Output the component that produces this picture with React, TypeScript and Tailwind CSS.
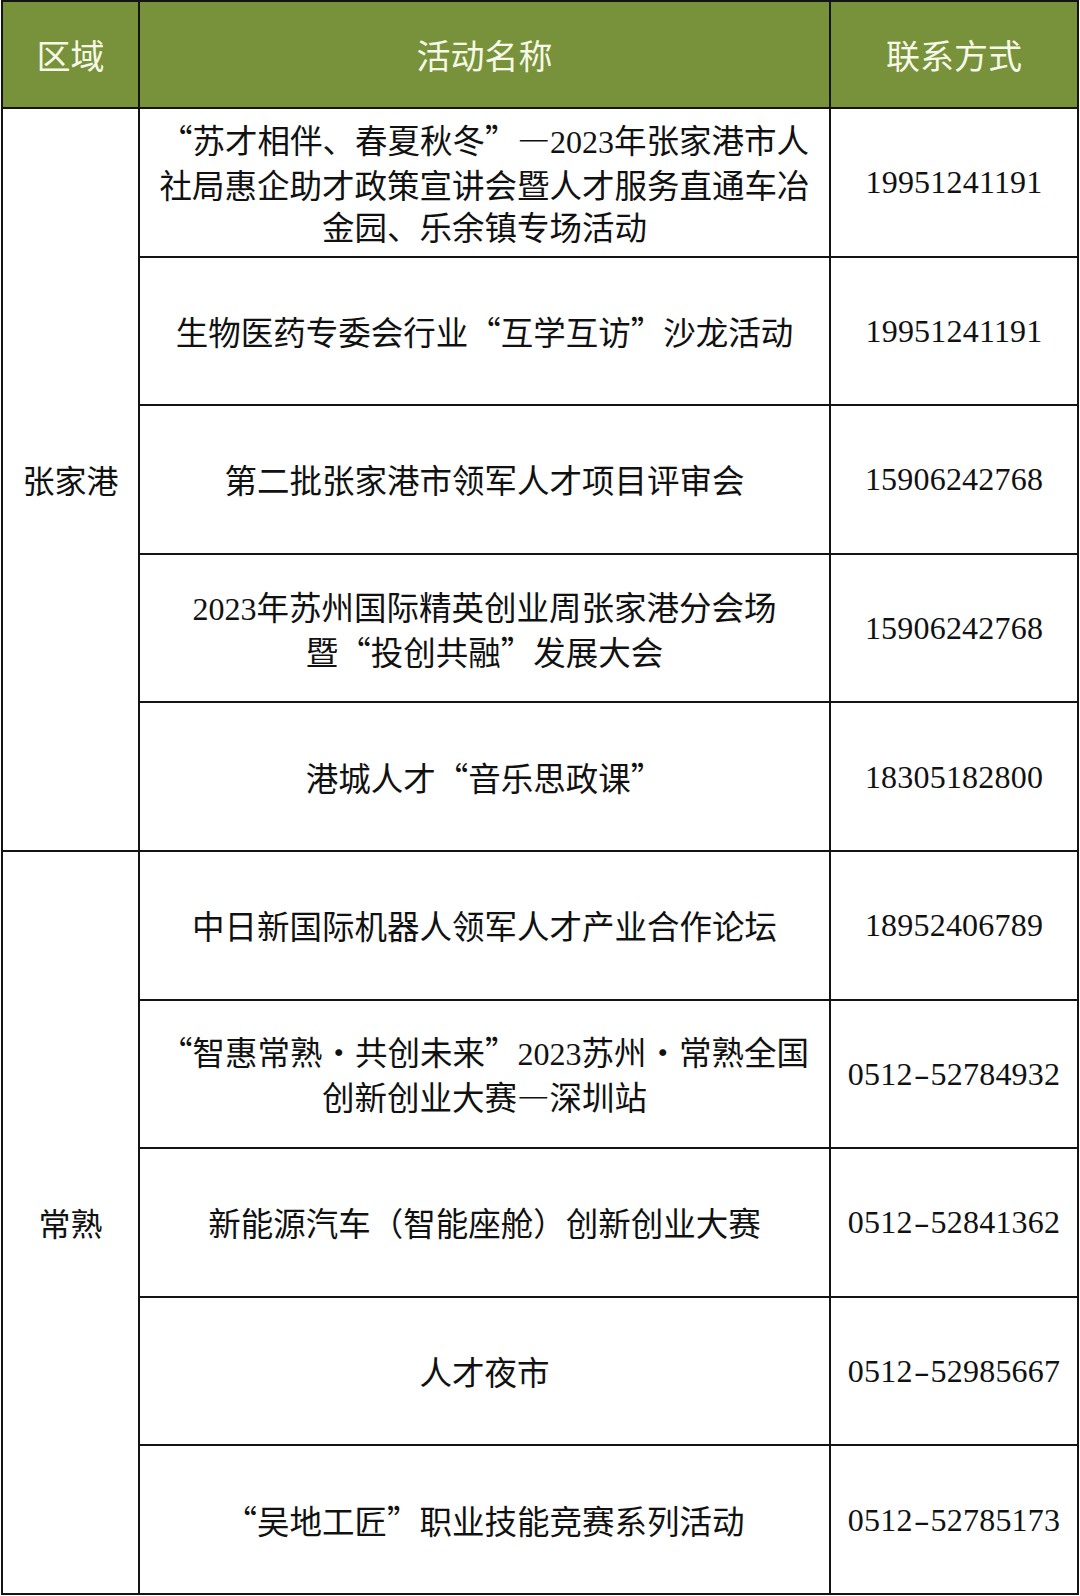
import React from "react";

type Row = { lines: string[]; phone: string };

const zjg: Row[] = [
  {
    lines: [
      "“苏才相伴、春夏秋冬”—2023年张家港市人",
      "社局惠企助才政策宣讲会暨人才服务直通车冶",
      "金园、乐余镇专场活动",
    ],
    phone: "19951241191",
  },
  { lines: ["生物医药专委会行业“互学互访”沙龙活动"], phone: "19951241191" },
  { lines: ["第二批张家港市领军人才项目评审会"], phone: "15906242768" },
  {
    lines: ["2023年苏州国际精英创业周张家港分会场", "暨“投创共融”发展大会"],
    phone: "15906242768",
  },
  { lines: ["港城人才“音乐思政课”"], phone: "18305182800" },
];

const cs: Row[] = [
  { lines: ["中日新国际机器人领军人才产业合作论坛"], phone: "18952406789" },
  {
    lines: ["“智惠常熟·共创未来”2023苏州·常熟全国", "创新创业大赛—深圳站"],
    phone: "0512-52784932",
  },
  { lines: ["新能源汽车（智能座舱）创新创业大赛"], phone: "0512-52841362" },
  { lines: ["人才夜市"], phone: "0512-52985667" },
  { lines: ["“吴地工匠”职业技能竞赛系列活动"], phone: "0512-52785173" },
];

// digits go in a serif face, the rest stays in the CJK face
function Mixed({ text }: { text: string }) {
  const parts = text.split(/([0-9]+)/);
  return (
    <>
      {parts.map((p, i) =>
        /^[0-9]+$/.test(p) ? (
          <span key={i} className="font-['Liberation_Serif',serif] text-[32px]">
            {p}
          </span>
        ) : (
          <span key={i}>{p}</span>
        )
      )}
    </>
  );
}

function Phone({ value }: { value: string }) {
  const [a, b] = value.split("-");
  return (
    <span className="font-['Liberation_Serif',serif] text-[32px] tracking-[0.2px]">
      {b ? (
        <>
          {a}
          <span className="inline-block w-[18px] text-center scale-x-[1.5]">-</span>
          {b}
        </>
      ) : (
        a
      )}
    </span>
  );
}

function Cell({ children }: { children: React.ReactNode }) {
  return (
    <div className="bg-white flex items-center justify-center text-center text-[32.5px] leading-[42px] text-[#111] [font-feature-settings:'fwid']">
      {children}
    </div>
  );
}

export default function App() {
  const rows = [...zjg, ...cs];
  return (
    <div className="w-[1080px] h-[1596px] bg-white">
      <div className="ml-[1px] w-[1078px] grid grid-cols-[135px_689px_246px] grid-rows-[105px_repeat(10,146.6px)] gap-[2px] p-[2px] bg-[#141414] font-['Noto_Sans_CJK_SC',sans-serif]">
        <div className="bg-[#77923b] flex items-center justify-center text-[34px] text-[#f8f8e8]">
          区域
        </div>
        <div className="bg-[#77923b] flex items-center justify-center text-[34px] text-[#f8f8e8]">
          活动名称
        </div>
        <div className="bg-[#77923b] flex items-center justify-center text-[34px] text-[#f8f8e8]">
          联系方式
        </div>

        {rows.map((r, i) => (
          <React.Fragment key={i}>
            {i === 0 && (
              <div className="bg-white flex items-center justify-center text-[32px] text-[#111] [grid-row:2/span_5] [grid-column:1]">
                张家港
              </div>
            )}
            {i === 5 && (
              <div className="bg-white flex items-center justify-center text-[32px] text-[#111] [grid-row:7/span_5] [grid-column:1]">
                常熟
              </div>
            )}
            <Cell>
              <div>
                {r.lines.map((l, j) => (
                  <div key={j} className="whitespace-nowrap">
                    <Mixed text={l} />
                  </div>
                ))}
              </div>
            </Cell>
            <Cell>
              <Phone value={r.phone} />
            </Cell>
          </React.Fragment>
        ))}
      </div>
    </div>
  );
}
